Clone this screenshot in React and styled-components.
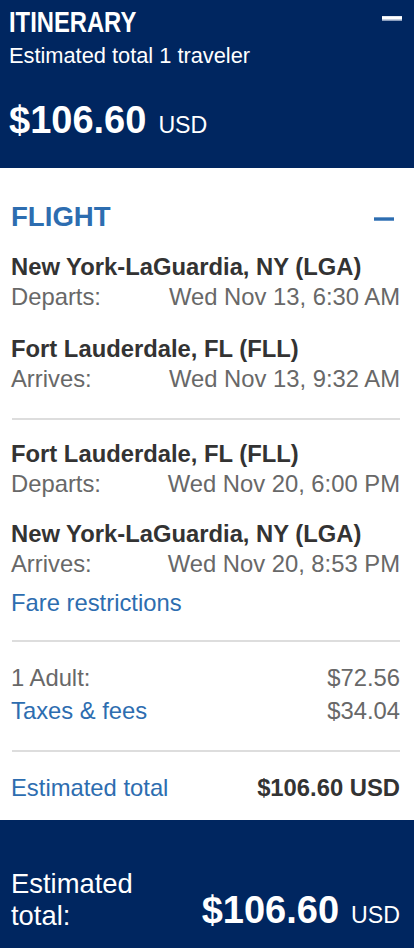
import React from "react";
import styled, { createGlobalStyle } from "styled-components";

const Global = createGlobalStyle`
  html, body { margin: 0; padding: 0; background: #ffffff; }
  body { font-family: "Liberation Sans", Arial, Helvetica, sans-serif; -webkit-font-smoothing: antialiased; }
  * { box-sizing: border-box; }
`;

const NAVY = "#002660";
const BLUE = "#2d6db0";
const DARK = "#333333";
const GRAY = "#686868";
const RULE = "#dddddd";
const TEXT = "23.8px";

const Page = styled.div`
  width: 414px;
  min-height: 948px;
  display: flex;
  flex-direction: column;
  background: #fff;
`;

const Header = styled.header`
  background: ${NAVY};
  color: #fff;
  padding: 5px 12px 26px 9px;
  display: flex;
  flex-direction: column;
`;

const TitleRow = styled.div`
  display: flex;
  justify-content: space-between;
  align-items: flex-start;
`;

const Title = styled.h1`
  margin: 0;
  display: inline-block;
  font-size: 29px;
  line-height: 34px;
  font-weight: 700;
  transform: scaleX(0.82);
  transform-origin: left center;
`;

const Minus = styled.span`
  display: block;
  width: 20px;
  margin-top: ${(p) => p.$top}px;
  margin-right: ${(p) => p.$right || 0}px;
  height: ${(p) => (p.$light ? 5 : 4)}px;
  background: ${(p) =>
    p.$light
      ? "linear-gradient(#c9d3e3 0, #ffffff 1px, #ffffff 3px, #8a9dbd 4px, #8a9dbd 5px)"
      : `linear-gradient(#b3cbe5 0, ${BLUE} 1px, ${BLUE} 3px, #9dbde0 4px)`};
`;

const Subtitle = styled.div`
  margin-top: 3px;
  font-size: 21.8px;
  line-height: 28px;
`;

const PriceLine = styled.div`
  margin-top: ${(p) => p.$mt || 0}px;
  white-space: nowrap;
  font-size: 38px;
  line-height: 44px;
`;

const Amount = styled.span`
  font-size: 38px;
  font-weight: 700;
  color: #fff;
`;

const Currency = styled.span`
  font-size: 23.2px;
  line-height: 1;
  margin-left: 12px;
  color: #fff;
`;

const Body = styled.main`
  flex: 1;
  padding: 33px 14px 17px 11px;
  display: flex;
  flex-direction: column;
`;

const SectionHead = styled.div`
  display: flex;
  justify-content: space-between;
  align-items: flex-start;
`;

const SectionTitle = styled.h2`
  margin: 0;
  font-size: 27.6px;
  line-height: 32px;
  font-weight: 700;
  color: ${BLUE};
`;

const Segments = styled.div`
  display: flex;
  flex-direction: column;
  gap: ${(p) => p.$gap}px;
  margin-top: ${(p) => p.$mt}px;
`;

const Segment = styled.div`
  display: flex;
  flex-direction: column;
`;

const City = styled.div`
  font-size: ${TEXT};
  line-height: 30px;
  font-weight: 700;
  color: ${DARK};
  white-space: nowrap;
`;

const Row = styled.div`
  display: flex;
  justify-content: space-between;
  align-items: baseline;
  font-size: ${TEXT};
  line-height: 30px;
  color: ${GRAY};
  white-space: nowrap;
  margin-top: ${(p) => p.$mt || 0}px;
`;

const Link = styled.a`
  color: ${BLUE};
  text-decoration: none;
  font-size: ${TEXT};
  line-height: 30px;
  cursor: pointer;
`;

const LinkLine = styled.div`
  margin-top: ${(p) => p.$mt || 0}px;
  font-size: ${TEXT};
  line-height: 30px;
`;

const Divider = styled.hr`
  border: none;
  height: 2px;
  background: ${RULE};
  margin: ${(p) => p.$mt}px 0 0 1px;
`;

const TotalValue = styled.span`
  font-weight: 700;
  color: ${DARK};
`;

const Footer = styled.footer`
  background: ${NAVY};
  color: #fff;
  height: 128px;
  padding: 48px 14px 16px 11px;
  display: flex;
  justify-content: space-between;
  align-items: flex-end;
`;

const FooterLabel = styled.div`
  font-size: 27.4px;
  line-height: 32px;
`;

const segmentsOut = [
  { city: "New York-LaGuardia, NY (LGA)", label: "Departs:", time: "Wed Nov 13, 6:30 AM" },
  { city: "Fort Lauderdale, FL (FLL)", label: "Arrives:", time: "Wed Nov 13, 9:32 AM" },
];
const segmentsBack = [
  { city: "Fort Lauderdale, FL (FLL)", label: "Departs:", time: "Wed Nov 20, 6:00 PM" },
  { city: "New York-LaGuardia, NY (LGA)", label: "Arrives:", time: "Wed Nov 20, 8:53 PM" },
];

function SegmentList({ items, gap, mt }) {
  return (
    <Segments $gap={gap} $mt={mt}>
      {items.map((s, i) => (
        <Segment key={i}>
          <City>{s.city}</City>
          <Row>
            <span>{s.label}</span>
            <span>{s.time}</span>
          </Row>
        </Segment>
      ))}
    </Segments>
  );
}

export default function App() {
  return (
    <>
      <Global />
      <Page>
        <Header>
          <TitleRow>
            <Title>ITINERARY</Title>
            <Minus $light $top={11} />
          </TitleRow>
          <Subtitle>Estimated total 1 traveler</Subtitle>
          <PriceLine $mt={28}>
            <Amount>$106.60</Amount>
            <Currency>USD</Currency>
          </PriceLine>
        </Header>
        <Body>
          <SectionHead>
            <SectionTitle>FLIGHT</SectionTitle>
            <Minus $top={16} $right={6} />
          </SectionHead>
          <SegmentList items={segmentsOut} gap={22} mt={19} />
          <Divider $mt={24} />
          <SegmentList items={segmentsBack} gap={20} mt={19} />
          <LinkLine $mt={9}>
            <Link>Fare restrictions</Link>
          </LinkLine>
          <Divider $mt={22} />
          <Row $mt={21}>
            <span>1 Adult:</span>
            <span>$72.56</span>
          </Row>
          <Row $mt={3}>
            <Link>Taxes &amp; fees</Link>
            <span>$34.04</span>
          </Row>
          <Divider $mt={24} />
          <Row $mt={21}>
            <Link>Estimated total</Link>
            <TotalValue>$106.60 USD</TotalValue>
          </Row>
        </Body>
        <Footer>
          <div>
            <FooterLabel>Estimated</FooterLabel>
            <FooterLabel>total:</FooterLabel>
          </div>
          <PriceLine>
            <Amount>$106.60</Amount>
            <Currency>USD</Currency>
          </PriceLine>
        </Footer>
      </Page>
    </>
  );
}
